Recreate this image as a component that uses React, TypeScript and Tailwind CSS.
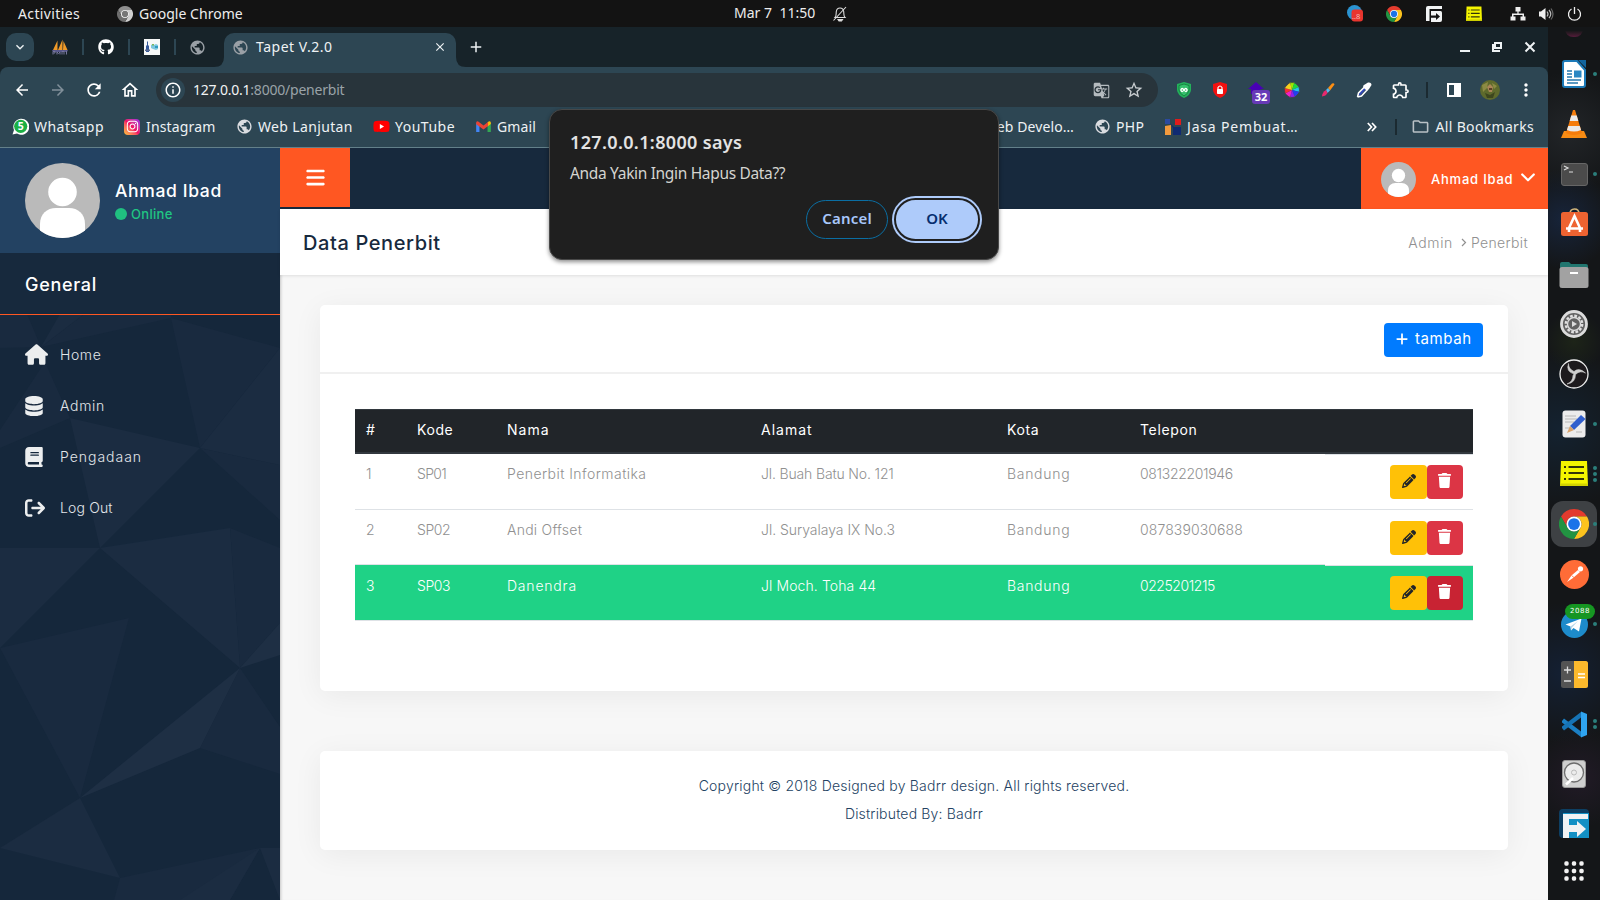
import type { ReactNode } from "react";
import {
  FaArrowRightFromBracket,
  FaBars,
  FaBook,
  FaDatabase,
  FaGithub,
  FaHouse,
  FaPencil,
  FaPlus,
  FaTrash,
  FaYoutube,
  FaInstagram,
} from "react-icons/fa6";
import {
  MdArrowBack,
  MdArrowForward,
  MdClose,
  MdGTranslate,
  MdMoreVert,
  MdOutlineExtension,
  MdOutlineFolder,
  MdOutlineHome,
  MdOutlineInfo,
  MdPublic,
  MdRefresh,
  MdStarOutline,
  MdAdd,
  MdExpandMore,
} from "react-icons/md";

/* ---------- shared drawings ---------- */

function ChromeLogo({ size, mono = false }: { size: number; mono?: boolean }) {
  return (
    <svg width={size} height={size} viewBox="0 0 48 48">
      <path d="M3.215 12A24 24 0 0 1 44.785 12L24 12A12 12 0 0 0 13.608 30Z" fill={mono ? "#8f8f8f" : "#e33b2e"} />
      <path d="M44.785 12A24 24 0 0 1 24 48L34.392 30A12 12 0 0 0 24 12Z" fill={mono ? "#d0d0d0" : "#fcc31e"} />
      <path d="M24 48A24 24 0 0 1 3.215 12L13.608 30A12 12 0 0 0 34.392 30Z" fill={mono ? "#6e6e6e" : "#229342"} />
      <circle cx="24" cy="24" r="12" fill="#fff" />
      <circle cx="24" cy="24" r="9.4" fill={mono ? "#777" : "#1a73e8"} />
    </svg>
  );
}

function Avatar({ size }: { size: number }) {
  return (
    <svg width={size} height={size} viewBox="0 0 75 75" className="shrink-0">
      <circle cx="37.5" cy="37.5" r="37.5" fill="#bababa" />
      <circle cx="37.5" cy="29" r="14.3" fill="#fff" />
      <path d="M15 67.5V61C15 51 22 45 31 45H44C53 45 60 51 60 61V67.5A37.5 37.5 0 0 1 15 67.5Z" fill="#fff" />
    </svg>
  );
}

function NotesIcon({ size }: { size: number }) {
  return (
    <svg width={size} height={size} viewBox="0 0 28 28">
      <path d="M1 1H27L28 26H0Z" fill="#f4f400" />
      <path d="M0 23.500H28V26H0Z" fill="#d2d200" />
      <g stroke="#33330a" strokeWidth="2">
        <path d="M4 7H6M8.500 7H24M4 13H6M8.500 13H24M4 19H6M8.500 19H24" />
      </g>
    </svg>
  );
}

function ArrowFIcon({ size }: { size: number }) {
  return (
    <svg width={size} height={size} viewBox="0 0 30 30">
      <rect width="30" height="29" rx="4" fill="#0d3f63" />
      <rect x="4" y="4" width="26" height="25" fill="#1390c4" />
      <path d="M4 5H29V10H10V16H18V12L27 20L18 28V23H10V29H4Z" fill="#f1f3f4" />
    </svg>
  );
}

function ArrowFTray() {
  return (
    <svg width="16" height="16" viewBox="0 0 16 16">
      <path d="M2 0H16V3H3.500V15H0V2Q0 0 2 0Z" fill="#f1f3f4" />
      <path d="M5 5H14.500Q16 5 16 6.500V14Q16 16 14 16H5Z" fill="#f1f3f4" />
      <path d="M5 9.500H10V7L14 10.500L10 14V11.700H5Z" fill="#131313" />
    </svg>
  );
}

/* ---------- desktop top bar ---------- */

function TopBar() {
  return (
    <header className="flex h-[27px] shrink-0 items-center bg-[#131313] font-['Noto_Sans',sans-serif] text-[14px] text-[#ededed]">
      <span className="ml-[18px] w-[99px] pb-[1px] tracking-[0.38px]">Activities</span>
      <ChromeLogo size={16} mono />
      <span className="ml-[6px] w-[595px] pb-[1px] tracking-[0.03px]">Google Chrome</span>
      <span className="w-[98px] pb-[2px] whitespace-pre tracking-[0.03px]">Mar 7  11:50</span>
      <svg width="16" height="16" viewBox="0 0 16 16" fill="none" stroke="#ddd" strokeWidth="1.100">
        <path d="M3 11.500C4.500 10 4 8 4.300 5.500C4.600 3.300 6 2 8 2S11.400 3.300 11.700 5.500C12 8 11.500 10 13 11.500ZM1.500 14.500L14 1" />
        <path d="M6 13.500H10.500L9.500 15H7Z" fill="#ddd" />
      </svg>
      <div className="ml-auto flex items-center pr-[18px]">
        <svg width="17" height="17" viewBox="0 0 17 17">
          <circle cx="7.500" cy="7.500" r="7.500" fill="#2b93d1" />
          <rect x="4.500" y="4.500" width="11.500" height="12" rx="3" fill="#e8352e" />
          <text x="5" y="14" fontSize="7.500" fontFamily="Noto Sans" fill="#f5b5b0">..8</text>
        </svg>
        <span className="ml-[22px]"><ChromeLogo size={16} /></span>
        <span className="ml-[24px]"><ArrowFTray /></span>
        <span className="ml-[24px]"><NotesIcon size={16} /></span>
        <svg width="16" height="16" viewBox="0 0 16 16" className="ml-[28px]" fill="#eee">
          <path d="M5.500 1H10.500V5.500H8.600V7.500H14V10.500H15.500V14.500H10.500V10.500H12.500V9H3.500V10.500H5.500V14.500H0.500V10.500H2V7.500H7.400V5.500H5.500Z" />
        </svg>
        <svg width="16" height="16" viewBox="0 0 16 16" className="ml-[12px]" fill="none" stroke="#bbb" strokeWidth="1.200">
          <path d="M1 5.500H3L7.500 2V14L3 10.500H1Z" fill="#eee" stroke="none" />
          <path d="M9 5.500Q11 8 9 10.500M11 4Q14.500 8 11 12" />
          <path d="M13 2.500Q17 8 13 13.500" stroke="#666" />
        </svg>
        <svg width="15" height="16" viewBox="0 0 15 16" className="ml-[13px]" fill="none" stroke="#eee" strokeWidth="1.300">
          <path d="M4.500 3A6 6 0 1 0 10.500 3M7.500 1V8" />
        </svg>
      </div>
    </header>
  );
}

/* ---------- browser chrome ---------- */

function TabStrip() {
  return (
    <div className="flex h-10 items-start bg-[#172329] pt-[6px] pl-[6px] text-[#eef2f4]">
      <div className="flex h-7 w-7 items-center justify-center rounded-[10px] bg-[#2d4653]">
        <MdExpandMore size={16} />
      </div>
      <div className="ml-[18px] flex h-7 w-4 items-center">
        <svg width="16" height="16" viewBox="0 0 16 16">
          <path d="M1 11L5.500 1.500V11ZM6 11L10.500 .5V11ZM11 11L11.500 2L15.500 11Z" fill="#f09a28" />
          <path d="M0 11H16L15 13H1Z" fill="#58588c" />
          <path d="M1 15.500V12.500H3V14H1.500M5 15.500V13L6.500 14.500L8 13V15.500M10 15.500V12.500H12V15.500M14.500 12V15.500" stroke="#77779c" fill="none" />
        </svg>
      </div>
      <i className="mt-[6px] ml-[14px] h-4 w-[2px] bg-[#2d4653]" />
      <span className="ml-[14px] flex h-7 w-4 items-center"><FaGithub size={16} color="#fff" /></span>
      <i className="mt-[6px] ml-[14px] h-4 w-[2px] bg-[#2d4653]" />
      <span className="ml-[14px] flex h-7 w-4 items-center">
        <svg width="16" height="16" viewBox="0 0 16 16">
          <rect width="16" height="16" fill="#f6f8f8" />
          <path d="M2 7L3 6V2.500H4V6L5 7V13H2Z" fill="#35599a" />
          <path d="M1 10.500H6V12H1Z" fill="#5a6a90" />
          <path d="M7 6L9 5L10 6L12 5L14 6V10L12 11L9 10L7 9Z" fill="#7cc7e0" />
          <path d="M8 5H10V6.500H8Z" fill="#78b75d" />
          <path d="M11 7H14V9H11Z" fill="#2f9bc0" />
        </svg>
      </span>
      <i className="mt-[6px] ml-[14px] h-4 w-[2px] bg-[#2d4653]" />
      <span className="ml-[14px] flex h-7 w-4 items-center"><MdPublic size={17} color="#9aa0a6" className="-ml-[1px] shrink-0" /></span>
      <svg width="10" height="10" viewBox="0 0 10 10" className="mt-[24px] ml-[8px] shrink-0"><path d="M10 0V10H0Q10 10 10 0Z" fill="#2d4653" /></svg>
      <div className="flex h-[34px] w-[232px] items-start rounded-t-[10px] bg-[#2d4653] pl-[8px]">
        <div className="flex h-7 w-full items-center">
          <MdPublic size={17} color="#9aa0a6" />
          <span className="ml-[7px] pb-[1px] text-[14px] tracking-[0.5px]">Tapet V.2.0</span>
          <MdClose size={14} className="mr-[9px] ml-auto" />
        </div>
      </div>
      <svg width="10" height="10" viewBox="0 0 10 10" className="mt-[24px] shrink-0"><path d="M0 0V10H10Q0 10 0 0Z" fill="#2d4653" /></svg>
      <span className="ml-[1px] flex h-7 items-center"><MdAdd size={18} /></span>
      <div className="mr-[10px] ml-auto flex h-7 items-center">
        <svg width="12" height="12" viewBox="0 0 12 12" fill="none" stroke="#eef2f4" strokeWidth="2"><path d="M1 10H11" /></svg>
        <svg width="12" height="12" viewBox="0 0 12 12" fill="none" stroke="#eef2f4" strokeWidth="2" className="ml-[20px]">
          <path d="M4 2H10V7H4ZM2 3V10H9" />
        </svg>
        <svg width="16" height="16" viewBox="0 0 16 16" fill="none" stroke="#eef2f4" strokeWidth="2" className="ml-[19px]"><path d="M3.500 3.500L12.500 12.500M12.500 3.500L3.500 12.500" /></svg>
      </div>
    </div>
  );
}

function Extensions() {
  return (
    <div className="ml-[16px] flex items-center">
      <svg width="20" height="18" viewBox="0 0 20 18">
        <path d="M10 1L17 3V9Q16.500 14 10 17Q3.500 14 3 9V3Z" fill="#23b25b" />
        <path d="M10 3L15 4.500V9Q14.500 12.500 10 15Q5.500 12.500 5 9V4.500Z" fill="#36c06d" stroke="#12763a" strokeWidth=".8" />
        <path d="M10 9Q8 6 6.800 9Q8 12 10 9Q12 6 13.200 9Q12 12 10 9" fill="none" stroke="#fff" strokeWidth="1.300" />
      </svg>
      <svg width="20" height="18" viewBox="0 0 20 18" className="ml-4">
        <path d="M10 1L17 3V9Q16.500 14 10 17Q3.500 14 3 9V3Z" fill="#f3100f" />
        <rect x="7" y="8" width="6" height="5" rx=".8" fill="#fff" />
        <path d="M8 8.500V6.500Q10 3.500 12 6.500V8.500" fill="none" stroke="#fff" strokeWidth="1.200" />
      </svg>
      <div className="relative ml-4 h-[18px] w-5">
        <svg width="20" height="18" viewBox="0 0 20 18"><path d="M10 1L18 8H15V13H5V8H2Z" fill="#4800b5" /></svg>
        <span className="absolute top-[9px] left-[6px] flex h-[14px] w-[18px] items-center justify-center rounded-[3px] bg-[#673ab7] text-[11px] font-bold text-white">32</span>
      </div>
      <svg width="20" height="18" viewBox="-10 -9 20 18" className="ml-4">
        <path d="M0 0L-2 -7.500H2.500Z" fill="#9be800" />
        <path d="M0 0L2.500 -7.500L7 -3Z" fill="#20d640" />
        <path d="M0 0L7 -3L7.500 2Z" fill="#22c6f1" />
        <path d="M0 0L7.500 2L3 7Z" fill="#2540ee" />
        <path d="M0 0L3 7L-2 7.500Z" fill="#8d21ef" />
        <path d="M0 0L-2 7.500L-7 3.500Z" fill="#ef20c7" />
        <path d="M0 0L-7 3.500L-7.500 -2Z" fill="#f42d35" />
        <path d="M0 0L-7.500 -2L-2 -7.500Z" fill="#f6cf1c" />
        <circle r="7.500" fill="none" stroke="#444" strokeWidth=".7" />
      </svg>
      <svg width="20" height="18" viewBox="0 0 20 18" className="ml-4">
        <path d="M10 7L14 2.500Q16 1.500 16.500 3.500L12 9.500Z" fill="#ff8f12" />
        <path d="M8 9L10 7L12 9.500L9.500 12Z" fill="#54b9ee" />
        <path d="M4 15.500Q4 11.500 8 9L9.500 12Q8 15 4 15.500Z" fill="#e8286e" />
      </svg>
      <svg width="20" height="18" viewBox="0 0 20 18" className="ml-4">
        <path d="M5 14L11.500 7" stroke="#3347b8" strokeWidth="2" />
        <path d="M9.500 5.500L13.500 9.500M3.500 16L4.500 12L11 5.500M3.500 16L7.500 15L13.500 8.500" fill="none" stroke="#fff" strokeWidth="1.500" />
        <path d="M10 4L14 1.500Q17.500 1 17.500 4L15 8L13.500 9.500L9 5Z" fill="#fff" />
      </svg>
      <MdOutlineExtension size={20} className="ml-[17px]" />
      <i className="ml-[15px] h-4 w-[2px] bg-[#1b2a31]" />
      <svg width="16" height="16" viewBox="0 0 16 16" className="ml-[18px]" fill="none" stroke="#fff" strokeWidth="2">
        <path d="M2 2H14V14H2Z" />
        <path d="M9 2H14V14H9Z" fill="#fff" />
      </svg>
      <svg width="20" height="20" viewBox="0 0 20 20" className="ml-[18px]">
        <circle cx="10" cy="10" r="10" fill="#5e6a2c" />
        <path d="M2 5L8 2L7 8L3 12ZM12 3L17 6L14 9Z" fill="#8c8b43" />
        <path d="M7 7L10 4L13 7L12 12L9 12Z" fill="#a98557" />
        <path d="M9 8H12V10H9Z" fill="#5b4027" />
        <path d="M5 13L10 15L15 12L13 18L7 18Z" fill="#3d461e" />
      </svg>
      <MdMoreVert size={20} className="ml-[16px]" />
    </div>
  );
}

function Toolbar() {
  return (
    <div className="flex h-[46px] items-center text-white">
      <MdArrowBack size={18} className="ml-[13px]" />
      <MdArrowForward size={18} className="ml-[18px] text-[#81909a]" />
      <MdRefresh size={20} className="ml-[17px]" />
      <MdOutlineHome size={20} className="ml-[16px]" />
      <div className="ml-[16px] flex h-[34px] w-[1002px] items-center rounded-full bg-[#28343b] pl-[5px]">
        <span className="flex h-6 w-6 items-center justify-center rounded-full bg-[#2d4653]"><MdOutlineInfo size={18} /></span>
        <span className="ml-[8px] pb-[1px] text-[14px] tracking-[-0.22px] text-[#9aa3a8]"><span className="text-[#f1f3f4]">127.0.0.1</span>:8000/penerbit</span>
        <MdGTranslate size={17} className="mr-[14px] ml-auto text-[#b5bbbf]" />
        <MdStarOutline size={20} className="mr-[14px] text-[#c8cdd0]" />
      </div>
      <Extensions />
    </div>
  );
}

function Mark({ icon, label, className }: { icon: ReactNode; label: string; className: string }) {
  return (
    <div className={`flex shrink-0 items-center whitespace-nowrap ${className}`}>
      <span className="flex w-4 shrink-0 justify-center">{icon}</span>
      <span className="ml-[6px]">{label}</span>
    </div>
  );
}

function BookmarkBar() {
  return (
    <div className="flex h-[35px] items-center border-b border-[#63808a] pt-[1px] pb-[8px] pl-3 text-[14px] text-[#eef2f4]">
      <Mark
        className="w-[112px] tracking-[0.45px]"
        label="Whatsapp"
        icon={
          <svg width="17" height="17" viewBox="0 0 17 17" className="shrink-0">
            <path d="M.5 16.500L2 12A8 8 0 1 1 5 15.500Z" fill="#fff" />
            <circle cx="8.700" cy="8.300" r="6.600" fill="#1bb045" />
            <text x="5.800" y="12.300" fontSize="10.500" fontWeight="700" fontFamily="Noto Sans" fill="#fff">5</text>
          </svg>
        }
      />
      <Mark
        className="w-[112px] tracking-[0.15px]"
        label="Instagram"
        icon={<span className="flex h-4 w-4 items-center justify-center rounded bg-linear-to-tr from-[#fdc22d] via-[#f20b63] to-[#9b1bea]"><FaInstagram size={13} color="#fff" /></span>}
      />
      <Mark className="w-[137px] tracking-[0.35px]" label="Web Lanjutan" icon={<MdPublic size={17} color="#dadce0" className="shrink-0" />} />
      <Mark className="w-[102px] tracking-[0.5px]" label="YouTube" icon={<span className="relative"><i className="absolute top-[5px] left-[5px] h-[6px] w-[6px] bg-white" /><FaYoutube size={17} color="#f00" className="relative" /></span>} />
      <Mark
        className="w-[490px] tracking-[0.1px]"
        label="Gmail"
        icon={
          <svg width="15" height="11" viewBox="0 0 16 12">
            <path d="M0 2V12H3.600V5Z" fill="#4285f4" />
            <path d="M12.400 5V12H16V2Z" fill="#34a853" />
            <path d="M12.400 1.500V6L16 3.200V1.500Q15 -1 12.400 1.500Z" fill="#fbbc04" />
            <path d="M0 1.500V3.500L8 9.200L13 5.500V1L8 4.800L3 1Q1 -.5 0 1.500Z" fill="#ea4335" />
          </svg>
        }
      />
      <Mark className="mr-[20px] ml-[-41px] w-[150px] justify-end tracking-[0.1px]" label="Web Develo…" icon={<MdPublic size={17} color="#dadce0" />} />
      <Mark className="w-[71px] tracking-[0.3px]" label="PHP" icon={<MdPublic size={17} color="#dadce0" className="shrink-0" />} />
      <Mark
        className="tracking-[0.83px]"
        label="Jasa Pembuat…"
        icon={
          <svg width="16" height="16" viewBox="0 0 16 16">
            <path d="M0 0H5V5H0Z" fill="#2b4aa0" />
            <path d="M10 0H16V6H10Z" fill="#e11b1b" />
            <path d="M0 7L6 6V16H0Z" fill="#f39a3e" />
            <path d="M5 4L9 8H16V16H8V9Z" fill="#102a72" />
          </svg>
        }
      />
      <div className="mr-[14px] ml-auto flex items-center">
        <svg width="10" height="10" viewBox="0 0 10 10" fill="none" stroke="#fff" strokeWidth="1.700"><path d="M.8 1L4.500 5L.8 9M5 1L8.700 5L5 9" /></svg>
        <i className="ml-[18px] h-4 w-[2px] bg-[#1b2a31]" />
        <MdOutlineFolder size={19} className="mr-[6px] ml-[14px] text-[#b9c1c6]" />
        <span className="tracking-[0.32px]">All Bookmarks</span>
      </div>
    </div>
  );
}

/* ---------- page ---------- */

const menu = [
  { label: "Home", tracking: "tracking-[0.6px]", icon: <FaHouse size={23} /> },
  { label: "Admin", tracking: "tracking-[0.7px]", icon: <FaDatabase size={20} className="-ml-[1px]" /> },
  { label: "Pengadaan", tracking: "tracking-[0.98px]", icon: <FaBook size={20} className="-ml-[1px]" /> },
  { label: "Log Out", tracking: "tracking-[0.15px]", icon: <FaArrowRightFromBracket size={20} /> },
];

function Facets() {
  return (
    <svg width="280" height="585" viewBox="0 315 280 585" className="absolute inset-0">
      <rect y="314" width="280" height="586" fill="#15273b" />
      <g fill="#192a3f">
        <path d="M0 314H27L41 347L0 348ZM84 314H171V318L41 347ZM171 318L280 348L200 448ZM45 362L70 418L0 448V430ZM200 448L280 465V520Z" />
        <path d="M230 528L280 548V623L240 668ZM0 648L129 618L80 798ZM240 668L280 727V774L200 748ZM114 900L120 878L260 848L230 900Z" />
      </g>
      <g fill="#1b2c41">
        <path d="M60 314H84L41 347ZM280 348V465L200 448ZM70 418L200 448L100 548ZM0 548H100L0 648ZM100 548L230 528L240 668Z" />
        <path d="M0 848L80 798L120 878ZM260 848H280V900ZM180 900L260 848L230 900Z" />
      </g>
      <path d="M240 668L200 748L80 798ZM240 668L280 623V655Z" fill="#1e2f44" />
    </svg>
  );
}

function Sidebar() {
  return (
    <aside className="flex w-[280px] shrink-0 flex-col text-white">
      <div className="flex h-[105px] items-center bg-[#234262] pl-[25px]">
        <Avatar size={75} />
        <div className="ml-[15px] pt-[2px]">
          <div className="text-[17.5px] leading-[24px] font-medium tracking-[0.65px]">Ahmad Ibad</div>
          <div className="flex items-center text-[13px] leading-[22px] font-medium tracking-[0.3px] text-[#20c682]">
            <i className="mr-[4px] h-3 w-3 rounded-full bg-[#20c080]" />
            Online
          </div>
        </div>
      </div>
      <div className="flex h-[62px] items-center border-b border-[#ff5722] bg-[#17293d] pt-[2px] pl-[25px] text-[18px] font-medium tracking-[0.7px]">General</div>
      <nav className="relative grow">
        <Facets />
        <ul className="relative pt-[14px] text-[14px] font-light text-[#e3e6ea]">
          {menu.map((m) => (
            <li key={m.label} className="flex h-[51px] items-center pl-[25px]">
              <span className="w-[35px] text-[#eceeef]">{m.icon}</span>
              <span className={m.tracking}>{m.label}</span>
            </li>
          ))}
        </ul>
      </nav>
    </aside>
  );
}

const headings = [
  { text: "#", tracking: "" },
  { text: "Kode", tracking: "tracking-[0.6px]" },
  { text: "Nama", tracking: "tracking-[1px]" },
  { text: "Alamat", tracking: "tracking-[1px]" },
  { text: "Kota", tracking: "tracking-[0.6px]" },
  { text: "Telepon", tracking: "tracking-[0.65px]" },
  { text: "", tracking: "" },
];

type Cell = [text: string, tracking: string];

const rows: { offset: string; buttons: string; cells: Cell[] }[] = [
  {
    offset: "pt-[8px]",
    buttons: "pt-[10px]",
    cells: [
      ["1", ""],
      ["SP01", "tracking-[-0.7px]"],
      ["Penerbit Informatika", "tracking-[0.45px]"],
      ["Jl. Buah Batu No. 121", "tracking-[-0.15px]"],
      ["Bandung", "tracking-[0.7px]"],
      ["081322201946", "tracking-[-0.33px]"],
    ],
  },
  {
    offset: "pt-[9px]",
    buttons: "pt-[11px]",
    cells: [
      ["2", ""],
      ["SP02", "tracking-[-0.45px]"],
      ["Andi Offset", "tracking-[0.25px]"],
      ["Jl. Suryalaya IX No.3", "tracking-[-0.03px]"],
      ["Bandung", "tracking-[0.7px]"],
      ["087839030688", "tracking-[0.1px]"],
    ],
  },
  {
    offset: "pt-[10px]",
    buttons: "pt-[11px]",
    cells: [
      ["3", ""],
      ["SP03", "tracking-[-0.45px]"],
      ["Danendra", "tracking-[0.8px]"],
      ["Jl Moch. Toha 44", "tracking-[0.1px]"],
      ["Bandung", "tracking-[0.7px]"],
      ["0225201215", "tracking-[-0.45px]"],
    ],
  },
];

function DataTable() {
  return (
    <table className="w-[1118px] table-fixed border-separate border-spacing-0 text-left text-[14px]">
      <colgroup>
        <col className="w-[51px]" />
        <col className="w-[90px]" />
        <col className="w-[254px]" />
        <col className="w-[246px]" />
        <col className="w-[133px]" />
        <col className="w-[196px]" />
        <col className="w-[148px]" />
      </colgroup>
      <thead>
        <tr className="h-[45px] bg-[#212529] text-white">
          {headings.map((h) => (
            <th key={h.text} className={`border-t border-b-2 border-[#32383e] pt-0 pb-[4px] pl-[11px] font-normal ${h.tracking}`}>{h.text}</th>
          ))}
        </tr>
      </thead>
      <tbody>
        {rows.map((r, i) => {
          const active = i === 2;
          return (
            <tr key={i} className={active ? "h-[56px] text-white" : "h-[55px] text-[#909090]"}>
              {r.cells.map(([text, tracking], j) => (
                <td
                  key={j}
                  className={`border-t pb-0 pl-[11px] align-top leading-[21px] font-light ${i === 0 ? "border-white" : "border-[#dee2e6]"} ${active ? "bg-[#1fd286]" : ""} ${r.offset} ${tracking}`}
                >
                  {text}
                </td>
              ))}
              <td className={`border-t p-0 align-top ${active ? "border-white bg-[#1fd286] shadow-[inset_0_1px_0_#dee2e6]" : "border-[#dee2e6]"}`}>
                <div className={`flex pl-[65px] ${r.buttons}`}>
                  <span className="flex h-[34px] w-[37px] items-center justify-center rounded-[4px] bg-[#ffc107] pb-[3px] text-[#212529]"><FaPencil size={14} /></span>
                  <span className={`flex h-[34px] w-9 items-center justify-center rounded-[4px] pr-px pb-[3px] text-white ${active ? "bg-[#c82333]" : "bg-[#dc3545]"}`}><FaTrash size={15} /></span>
                </div>
              </td>
            </tr>
          );
        })}
      </tbody>
    </table>
  );
}

function Content() {
  return (
    <main className="flex grow flex-col bg-[#f7f7f7] shadow-[inset_3px_0_3px_-2px_rgba(0,0,0,.2)]">
      <div className="flex h-[61px] shrink-0 items-start justify-between bg-[#17293d]">
        <span className="flex h-[59px] w-[70px] items-center justify-center bg-[#ff5722] pb-px text-white"><FaBars size={21} /></span>
        <div className="flex h-[61px] w-[187px] items-center bg-[#ff5722] pt-[2px] pl-5 text-white">
          <Avatar size={35} />
          <span className="ml-[15px] w-[90px] text-[13px] font-medium tracking-[0.78px] whitespace-nowrap">Ahmad Ibad</span>
          <svg width="14" height="9" viewBox="0 0 14 9" fill="none" stroke="#fff" strokeWidth="2.200" strokeLinecap="round" strokeLinejoin="round" className="mb-[4px]"><path d="M1.200 1.500L7 7.300L12.800 1.500" /></svg>
        </div>
      </div>
      <div className="flex h-[66px] shrink-0 items-center justify-between bg-white pt-[2px] pr-[20px] pl-[23px] shadow-[0_1px_3px_rgba(0,0,0,.1)]">
        <h1 className="text-[20px] font-medium tracking-[0.6px] text-[#17293d]">Data Penerbit</h1>
        <div className="flex items-center pb-[2px] text-[14px] font-light text-[#909090]">
          <span className="tracking-[0.65px]">Admin</span>
          <svg width="6" height="9" viewBox="0 0 6 9" fill="none" stroke="#909090" strokeWidth="1.200" className="mr-[4px] ml-[8px]"><path d="M1 1L4.500 4.500L1 8" /></svg>
          <span className="tracking-[0.35px]">Penerbit</span>
        </div>
      </div>
      <section className="mx-10 mt-[30px] h-[386px] shrink-0 rounded-[5px] bg-white shadow-[0_5px_30px_rgba(0,0,0,.06)]">
        <div className="flex h-[69px] items-start justify-end border-b-2 border-[#f0f0f0] pt-[18px] pr-[25px]">
          <span className="flex h-[34px] w-[99px] items-center rounded-[4px] bg-[#007bff] pb-[3px] pl-[11px] text-[15px] text-white">
            <FaPlus size={14} />
            <span className="ml-[6px] pt-[1px] tracking-[0.6px]">tambah</span>
          </span>
        </div>
        <div className="flex pt-[35px] pl-[35px]">
          <div className="border-b border-[#dee2e6]"><DataTable /></div>
        </div>
      </section>
      <footer className="mx-10 mt-[60px] h-[99px] shrink-0 rounded-[5px] bg-white pt-[21px] text-center text-[14px] leading-[28px] font-light text-[#234262] shadow-[0_5px_30px_rgba(0,0,0,.06)]">
        <p className="tracking-[0.2px]">Copyright © 2018 Designed by Badrr design. All rights reserved.</p>
        <p className="tracking-[0.17px]">Distributed By: Badrr</p>
      </footer>
    </main>
  );
}

/* ---------- confirm dialog ---------- */

function ConfirmDialog() {
  return (
    <div className="absolute top-[109px] left-[549px] h-[151px] w-[450px] rounded-[13px] border border-[#484848] bg-[#1f1f1f] px-[20px] pt-[20px] font-['Noto_Sans',sans-serif] shadow-[0_2px_4px_rgba(0,0,0,.45)]">
      <h2 className="text-[18px] leading-[25px] font-semibold tracking-[0.35px] text-[#e3e3e3]">127.0.0.1:8000 says</h2>
      <p className="mt-[7px] text-[15.5px] leading-[22px] tracking-[-0.33px] text-[#d4d4d0]">Anda Yakin Ingin Hapus Data??</p>
      <div className="mt-[16px] flex justify-end text-[15px] font-semibold">
        <span className="flex h-[39px] w-[82px] items-center justify-center rounded-full border border-[#0a6ea3] pb-[2px] tracking-[0.2px] text-[#a8c7fa]">Cancel</span>
        <span className="ml-[8px] flex h-[39px] w-[82px] items-center justify-center rounded-full bg-[#aecbfa] pb-[2px] text-[#062e6f] ring-4 ring-[#aecbfa] outline-2 outline-[#1f1f1f]">OK</span>
      </div>
    </div>
  );
}

/* ---------- dock ---------- */

const dock: { icon: ReactNode; dots: number; active?: boolean; badge?: string }[] = [
  {
    dots: 1,
    icon: (
      <svg width="24" height="28" viewBox="0 0 24 28">
        <path d="M3 1H15L23 10V25Q23 27 21 27H3Q1 27 1 25V3Q1 1 3 1Z" fill="#fff" stroke="#1c7ab8" strokeWidth="2" />
        <path d="M16 0H24V8Z" fill="#12659e" />
        <path d="M5 11H10M5 14H10M5 17H10M5 20H19M5 23H16" stroke="#2577ad" strokeWidth="1.300" />
        <path d="M12 10.500H19.500V17.500H12Z" fill="#2b87c3" />
      </svg>
    ),
  },
  {
    dots: 0,
    icon: (
      <svg width="26" height="30" viewBox="0 0 26 30">
        <path d="M3 22H23L26 29H0Z" fill="#f88c14" />
        <path d="M12 1H14L21 24Q13 28 5 24Z" fill="#f57c0b" />
        <path d="M10.200 6.500H15.800L17.300 12H8.700ZM7.200 17H18.800L20 21Q13 24 6 21Z" fill="#e9e9e9" />
      </svg>
    ),
  },
  {
    dots: 1,
    icon: (
      <svg width="27" height="23" viewBox="0 0 27 23">
        <rect x=".5" y=".5" width="26" height="22" rx="2.500" fill="#4b4b4b" stroke="#666" />
        <path d="M3 3L7 5L3 7M8 9H12" fill="none" stroke="#ddd" strokeWidth="1.200" />
      </svg>
    ),
  },
  {
    dots: 0,
    icon: (
      <svg width="27" height="28" viewBox="0 0 27 28" className="mb-[4px]">
        <path d="M9 6Q9 1 13.500 1T18 6" fill="none" stroke="#d3b67b" strokeWidth="1.600" />
        <rect y="4" width="27" height="24" rx="2.500" fill="#ee6331" />
        <path d="M8 20L13.500 8L19 20M5 20.500H22M8 20V24M19 20V24" fill="none" stroke="#fff" strokeWidth="2.600" />
      </svg>
    ),
  },
  {
    dots: 0,
    icon: (
      <svg width="30" height="27" viewBox="0 0 30 27">
        <path d="M1 3Q1 1 3 1H10L12 3H27Q29 3 29 5V15H1Z" fill="#21766f" />
        <rect x=".5" y="6" width="29" height="21" rx="2.500" fill="#a2a2a2" />
        <path d="M11 12H19" stroke="#fff" strokeWidth="2" />
      </svg>
    ),
  },
  {
    dots: 0,
    icon: (
      <svg width="28" height="28" viewBox="0 0 28 28">
        <circle cx="14" cy="14" r="12.500" fill="#626262" stroke="#dcdcdc" strokeWidth="2.800" />
        <circle cx="14" cy="14" r="8.200" fill="none" stroke="#e0e0e0" strokeWidth="2.400" strokeDasharray="2.700 1.600" />
        <circle cx="14" cy="14" r="6.500" fill="none" stroke="#dcdcdc" strokeWidth="1.400" />
        <path d="M12 11L17 14L12 17Z" fill="#dcdcdc" />
      </svg>
    ),
  },
  {
    dots: 0,
    icon: (
      <svg width="30" height="30" viewBox="0 0 30 30">
        <circle cx="15" cy="15" r="14" fill="#1d1a1d" stroke="#eee" strokeWidth="1.300" />
        <path d="M15 15Q6.500 12.500 9.500 4.500Q9.500 10 15 12.500Q20 8 26.500 14Q21 11 16.500 15.500Q16.500 24 8 25Q14 22.500 14 16.500Z" fill="#cfcfcf" stroke="#cfcfcf" strokeWidth=".6" />
      </svg>
    ),
  },
  {
    dots: 1,
    icon: (
      <svg width="25" height="28" viewBox="0 0 25 28">
        <rect x=".5" y=".5" width="23" height="27" rx="3" fill="#ececec" />
        <path d="M3 6H14M3 9H15M3 12H12M3 18H8M14 22H20" stroke="#c9c9c9" strokeWidth="1.500" />
        <path d="M8 16L19 5L23.500 9L12 20Z" fill="#315fcd" />
        <path d="M8 16L12 20L5 23Z" fill="#d9a36b" />
      </svg>
    ),
  },
  { dots: 3, icon: <NotesIcon size={28} /> },
  { dots: 1, active: true, icon: <ChromeLogo size={30} /> },
  {
    dots: 0,
    icon: (
      <svg width="29" height="29" viewBox="0 0 29 29">
        <circle cx="14.500" cy="14.500" r="14.500" fill="#ff6c37" />
        <path d="M7 22L11.500 15.500L18 10L20 12L13 18Z" fill="#fff" />
        <circle cx="20.500" cy="8.800" r="2.600" fill="#fff" />
        <path d="M11.500 15.500L14 17.500" stroke="#ff6c37" strokeWidth=".8" />
      </svg>
    ),
  },
  {
    dots: 1,
    badge: "2088",
    icon: (
      <svg width="27" height="27" viewBox="0 0 27 27">
        <circle cx="13.500" cy="13.500" r="13.500" fill="#1d8bcb" />
        <path d="M4.500 13.500L20.500 7.500L18 20.500L12.500 17L10 19.500L9.500 15.500Z" fill="#fff" />
        <path d="M9.500 15.500L17 10L11 16.500L10 19.500Z" fill="#b8d7e9" />
      </svg>
    ),
  },
  {
    dots: 0,
    icon: (
      <svg width="27" height="27" viewBox="0 0 27 27">
        <rect width="27" height="27" rx="2.500" fill="#545454" />
        <path d="M13 0H24.500Q27 0 27 2.500V24.500Q27 27 24.500 27H13Z" fill="#fcb92c" />
        <path d="M3 9H10M6.500 5.500V12.500M3 20H10" stroke="#ddd" strokeWidth="1.300" />
        <path d="M17 13H24M17 16.500H24" stroke="#fff" strokeWidth="1.300" />
      </svg>
    ),
  },
  {
    dots: 2,
    icon: (
      <svg width="27" height="27" viewBox="0 0 27 27">
        <path d="M1 10L3 7.500L20 20.500V26L1 11.500Z" fill="#1b7fc4" />
        <path d="M1 17L3 19.500L20 6.500V1L1 15.500Z" fill="#1673b5" />
        <path d="M20 .5L26 3V24L20 26.500Z" fill="#2fa4f0" />
      </svg>
    ),
  },
  {
    dots: 0,
    icon: (
      <svg width="24" height="28" viewBox="0 0 24 28">
        <rect x=".5" y=".5" width="23" height="27" rx="2.500" fill="#cfcfcf" stroke="#999" />
        <circle cx="12" cy="12.500" r="9.500" fill="#ececec" stroke="#6d6d6d" strokeWidth="1.300" />
        <circle cx="12" cy="12.500" r="2.500" fill="none" stroke="#bbb" />
        <path d="M4 24.500L11 18" stroke="#fff" strokeWidth="2.500" />
      </svg>
    ),
  },
  { dots: 0, icon: <ArrowFIcon size={30} /> },
];

function Dock() {
  return (
    <aside className="flex w-[52px] flex-col overflow-hidden bg-[#141618] bg-[radial-gradient(circle_at_30%_22%,#17243a_0,transparent_50px),radial-gradient(circle_at_50%_36%,#1d2418_0,transparent_30px),radial-gradient(circle_at_40%_12%,#222528_0,transparent_60px),radial-gradient(circle_at_20%_46%,#142230_0,transparent_80px),radial-gradient(circle_at_30%_74%,#142033_0,transparent_70px),radial-gradient(circle_at_60%_86%,#211a26_0,transparent_50px)]">
      <i className="-mt-[6px] h-4 w-[18px] shrink-0 self-center rounded-full bg-linear-to-b from-[#141618] from-60% to-[#551b3b]" />
      <ul className="mt-[12px] flex flex-col">
        {dock.map((d, i) => (
          <li key={i} className="relative flex h-[50px] items-center justify-center">
            <span className={`relative flex h-[46px] w-[46px] items-center justify-center rounded-xl ${d.active ? "bg-[#3e4144]" : ""}`}>
              {d.icon}
              {d.badge && (
                <b className="absolute top-[3px] left-[14px] flex h-[15px] w-[30px] items-center justify-center rounded-full bg-[#169622] font-['DejaVu_Sans',sans-serif] text-[7px] font-normal tracking-[0.6px] text-white">{d.badge}</b>
              )}
            </span>
            <span className="absolute top-0 right-[3px] flex h-full flex-col justify-center gap-[2px]">
              {Array.from({ length: d.dots }, (_, k) => (
                <i key={k} className="h-1 w-1 rounded-full bg-[#2b7f7b]" />
              ))}
            </span>
          </li>
        ))}
      </ul>
      <svg width="20" height="20" viewBox="0 0 20 20" fill="#f2f2f2" className="mt-[12px] shrink-0 self-center">
        {[2.5, 10, 17.5].map((y) => [2.5, 10, 17.5].map((x) => <rect key={`${x}-${y}`} x={x - 2.2} y={y - 2.2} width="4.400" height="4.400" rx="1.600" />))}
      </svg>
    </aside>
  );
}

export default function App() {
  return (
    <div className="relative flex h-[900px] w-[1600px] flex-col overflow-hidden bg-[#131313] font-['Inter',sans-serif]">
      <TopBar />
      <div className="flex h-[873px]">
        <div className="flex w-[1548px] shrink-0 flex-col">
          <div className="bg-[#172329] font-['Noto_Sans',sans-serif]">
            <TabStrip />
            <div className="rounded-t-lg bg-[#2d4653]">
              <Toolbar />
              <BookmarkBar />
            </div>
          </div>
          <div className="flex grow">
            <Sidebar />
            <Content />
          </div>
        </div>
        <Dock />
      </div>
      <ConfirmDialog />
    </div>
  );
}
